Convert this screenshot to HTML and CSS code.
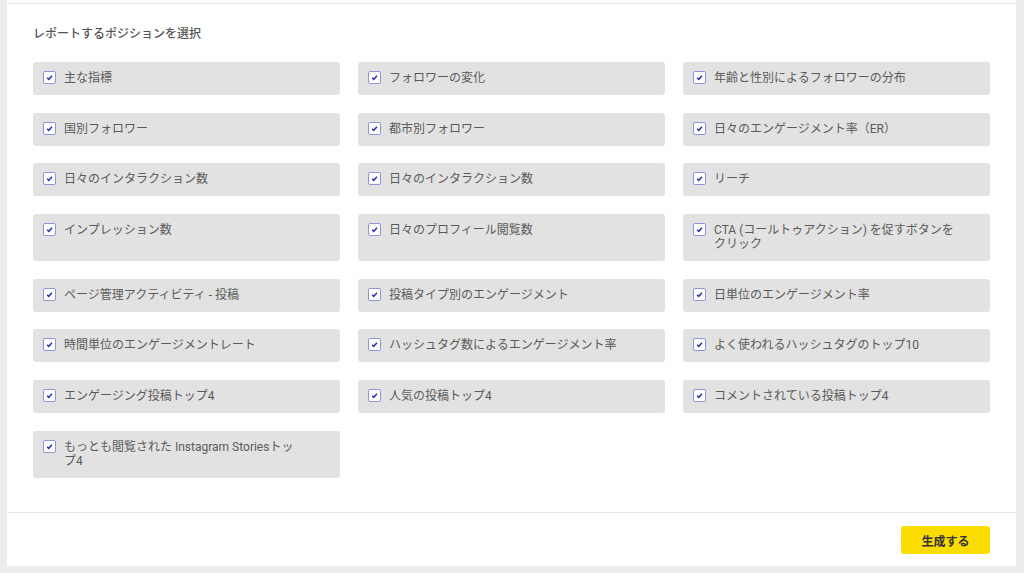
FILE: index.html
```html
<!DOCTYPE html>
<html lang="ja">
<head>
<meta charset="utf-8">
<link rel="stylesheet" href="styles.css">
</head>
<body>
<div class="panel">
  <div class="body">
    <h2 class="title">レポートするポジションを選択</h2>
    <div class="grid">
      <label class="item"><span class="cb"><svg viewBox="0 0 12 12"><path d="M3.4 6.3 L5.2 8 L8.7 4.2" /></svg></span><span class="txt">主な指標</span></label>
      <label class="item"><span class="cb"><svg viewBox="0 0 12 12"><path d="M3.4 6.3 L5.2 8 L8.7 4.2" /></svg></span><span class="txt">フォロワーの変化</span></label>
      <label class="item"><span class="cb"><svg viewBox="0 0 12 12"><path d="M3.4 6.3 L5.2 8 L8.7 4.2" /></svg></span><span class="txt">年齢と性別によるフォロワーの分布</span></label>
      <label class="item"><span class="cb"><svg viewBox="0 0 12 12"><path d="M3.4 6.3 L5.2 8 L8.7 4.2" /></svg></span><span class="txt">国別フォロワー</span></label>
      <label class="item"><span class="cb"><svg viewBox="0 0 12 12"><path d="M3.4 6.3 L5.2 8 L8.7 4.2" /></svg></span><span class="txt">都市別フォロワー</span></label>
      <label class="item"><span class="cb"><svg viewBox="0 0 12 12"><path d="M3.4 6.3 L5.2 8 L8.7 4.2" /></svg></span><span class="txt">日々のエンゲージメント率（ER）</span></label>
      <label class="item"><span class="cb"><svg viewBox="0 0 12 12"><path d="M3.4 6.3 L5.2 8 L8.7 4.2" /></svg></span><span class="txt">日々のインタラクション数</span></label>
      <label class="item"><span class="cb"><svg viewBox="0 0 12 12"><path d="M3.4 6.3 L5.2 8 L8.7 4.2" /></svg></span><span class="txt">日々のインタラクション数</span></label>
      <label class="item"><span class="cb"><svg viewBox="0 0 12 12"><path d="M3.4 6.3 L5.2 8 L8.7 4.2" /></svg></span><span class="txt">リーチ</span></label>
      <label class="item"><span class="cb"><svg viewBox="0 0 12 12"><path d="M3.4 6.3 L5.2 8 L8.7 4.2" /></svg></span><span class="txt">インプレッション数</span></label>
      <label class="item"><span class="cb"><svg viewBox="0 0 12 12"><path d="M3.4 6.3 L5.2 8 L8.7 4.2" /></svg></span><span class="txt">日々のプロフィール閲覧数</span></label>
      <label class="item"><span class="cb"><svg viewBox="0 0 12 12"><path d="M3.4 6.3 L5.2 8 L8.7 4.2" /></svg></span><span class="txt">CTA (コールトゥアクション) を促すボタンをクリック</span></label>
      <label class="item"><span class="cb"><svg viewBox="0 0 12 12"><path d="M3.4 6.3 L5.2 8 L8.7 4.2" /></svg></span><span class="txt">ページ管理アクティビティ - 投稿</span></label>
      <label class="item"><span class="cb"><svg viewBox="0 0 12 12"><path d="M3.4 6.3 L5.2 8 L8.7 4.2" /></svg></span><span class="txt">投稿タイプ別のエンゲージメント</span></label>
      <label class="item"><span class="cb"><svg viewBox="0 0 12 12"><path d="M3.4 6.3 L5.2 8 L8.7 4.2" /></svg></span><span class="txt">日単位のエンゲージメント率</span></label>
      <label class="item"><span class="cb"><svg viewBox="0 0 12 12"><path d="M3.4 6.3 L5.2 8 L8.7 4.2" /></svg></span><span class="txt">時間単位のエンゲージメントレート</span></label>
      <label class="item"><span class="cb"><svg viewBox="0 0 12 12"><path d="M3.4 6.3 L5.2 8 L8.7 4.2" /></svg></span><span class="txt">ハッシュタグ数によるエンゲージメント率</span></label>
      <label class="item"><span class="cb"><svg viewBox="0 0 12 12"><path d="M3.4 6.3 L5.2 8 L8.7 4.2" /></svg></span><span class="txt">よく使われるハッシュタグのトップ10</span></label>
      <label class="item"><span class="cb"><svg viewBox="0 0 12 12"><path d="M3.4 6.3 L5.2 8 L8.7 4.2" /></svg></span><span class="txt">エンゲージング投稿トップ4</span></label>
      <label class="item"><span class="cb"><svg viewBox="0 0 12 12"><path d="M3.4 6.3 L5.2 8 L8.7 4.2" /></svg></span><span class="txt">人気の投稿トップ4</span></label>
      <label class="item"><span class="cb"><svg viewBox="0 0 12 12"><path d="M3.4 6.3 L5.2 8 L8.7 4.2" /></svg></span><span class="txt">コメントされている投稿トップ4</span></label>
      <label class="item"><span class="cb"><svg viewBox="0 0 12 12"><path d="M3.4 6.3 L5.2 8 L8.7 4.2" /></svg></span><span class="txt">もっとも閲覧された Instagram Storiesトップ4</span></label>
    </div>
  </div>
  <div class="footer">
    <button class="btn">生成する</button>
  </div>
</div>
</body>
</html>
```
FILE: styles.css
```css
* { box-sizing: border-box; }
html, body { margin: 0; padding: 0; }
body {
  background: #ececec;
  font-family: Roboto, "Noto Sans CJK JP", sans-serif;
  color: #555;
  width: 1024px;
  height: 573px;
  overflow: hidden;
}
.panel {
  margin: 0 8px 0 7px;
  background: #fff;
  height: 566px;
  border-top: 3px solid #fff;
  display: flex;
  flex-direction: column;
}
.body {
  border-top: 1px solid #e6e6e6;
  padding: 22px 26px 0 26px;
  flex: 1;
}
.title {
  margin: 0 0 20px 0;
  font-size: 12px;
  font-weight: 500;
  line-height: 16px;
  color: #555;
}
.grid {
  display: grid;
  grid-template-columns: repeat(3, 307px);
  column-gap: 18px;
  row-gap: 17.7px;
}
.item {
  background: #e2e2e2;
  border-radius: 3px;
  display: flex;
  align-items: flex-start;
  padding: 9px 36px 10px 10px;
  font-size: 12px;
  line-height: 14px;
  color: #5a5a5a;
}
.cb {
  flex: none;
  width: 13px;
  height: 13px;
  margin-top: 0;
  margin-right: 8px;
  background: #fff;
  border: 1px solid #9194d8;
  border-radius: 2px;
  display: flex;
  align-items: center;
  justify-content: center;
}
.cb svg {
  width: 11px;
  height: 11px;
  fill: none;
  stroke: #2a2fb8;
  stroke-width: 1.6;
}
.footer {
  border-top: 1px solid #e6e6e6;
  height: 54px;
  display: flex;
  justify-content: flex-end;
  align-items: flex-start;
  padding: 13px 26px 0 0;
}
.btn {
  width: 89px;
  height: 28px;
  border: none;
  border-radius: 3px;
  background: #fadc00;
  color: #333;
  font-family: Roboto, "Noto Sans CJK JP", sans-serif;
  font-size: 12px;
  font-weight: 700;
}
```
